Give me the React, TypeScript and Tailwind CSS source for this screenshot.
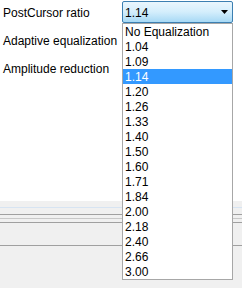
const ratios = [
  'No Equalization',
  '1.04',
  '1.09',
  '1.14',
  '1.20',
  '1.26',
  '1.33',
  '1.40',
  '1.50',
  '1.60',
  '1.71',
  '1.84',
  '2.00',
  '2.18',
  '2.40',
  '2.66',
  '3.00',
];

const selected = '1.14';

function ComboBox({ value }: { value: string }) {
  return (
    <div className="w-[111px] h-[22px] flex items-center justify-between border border-[#3c7fb1] rounded-[2px] bg-gradient-to-b from-[#eaf6fd] via-[#d4eefc] to-[#a7d9f5] pl-[2px] pr-[4px]">
      <span className="text-black pt-[2px]">{value}</span>
      <svg width="7" height="4" viewBox="0 0 7 4" className="block">
        <path d="M0 0 H7 L3.5 4 Z" fill="#000" />
      </svg>
    </div>
  );
}

export default function App() {
  return (
    <div
      className="relative w-[242px] h-[288px] overflow-hidden bg-white flex flex-col text-[12px] leading-[15px] text-black"
      style={{ fontFamily: '"Liberation Sans", Arial, sans-serif' }}
    >
      {/* form */}
      <div className="h-[201px] pt-[1px] flex flex-col">
        <div className="flex items-center h-[22px]">
          <div className="w-[122px] pl-[3px] pt-[2px]">PostCursor ratio</div>
          <ComboBox value={selected} />
        </div>
        <div className="flex items-center h-[22px] mt-[7px] pl-[3px]">Adaptive equalization</div>
        <div className="flex items-center h-[22px] mt-[6px] pl-[3px]">Amplitude reduction</div>
      </div>

      {/* bottom panel */}
      <div className="flex-1 bg-[#f0f0f0] flex flex-col">
        <div className="mt-[6px] h-[1px] bg-[#d7e4f2]" />
        <div className="mt-[6px] h-[1px] bg-[#a0a0a0]" />
        <div className="mt-[3px] h-[1px] bg-[#c8c8c8]" />
        <div className="mt-[3px] h-[1px] bg-[#a0a0a0]" />
        <div className="mt-[22px] h-[1px] bg-[#a0a0a0]" />
      </div>

      {/* open dropdown list */}
      <ul className="absolute left-[122px] top-[23px] w-[111px] border border-[#a7a7a7] bg-white">
        {ratios.map((r) => (
          <li
            key={r}
            className={
              'h-[15px] pl-[2px] pt-[1px] leading-[14px] whitespace-nowrap ' +
              (r === selected ? 'bg-[#3399ff] text-white' : 'text-black')
            }
          >
            {r}
          </li>
        ))}
      </ul>
    </div>
  );
}
